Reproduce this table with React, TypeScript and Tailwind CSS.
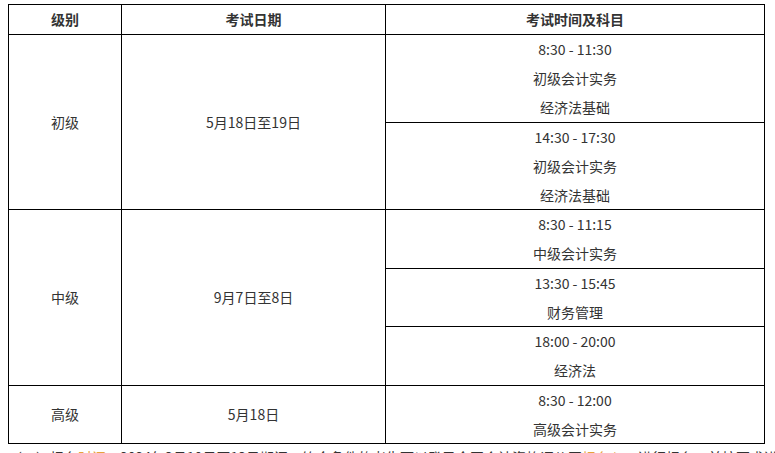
const font = { fontFamily: '"Noto Sans CJK SC", "Microsoft YaHei", sans-serif' };

type Slot = { time: string; subjects: string[] };

const levels: { name: string; date: string; slots: Slot[] }[] = [
  {
    name: "初级",
    date: "5月18日至19日",
    slots: [
      { time: "8:30 - 11:30", subjects: ["初级会计实务", "经济法基础"] },
      { time: "14:30 - 17:30", subjects: ["初级会计实务", "经济法基础"] },
    ],
  },
  {
    name: "中级",
    date: "9月7日至8日",
    slots: [
      { time: "8:30 - 11:15", subjects: ["中级会计实务"] },
      { time: "13:30 - 15:45", subjects: ["财务管理"] },
      { time: "18:00 - 20:00", subjects: ["经济法"] },
    ],
  },
  {
    name: "高级",
    date: "5月18日",
    slots: [{ time: "8:30 - 12:00", subjects: ["高级会计实务"] }],
  },
];

function SlotCell({ slot }: { slot: Slot }) {
  return (
    <td className="border border-black text-center align-middle p-0">
      <div className="leading-[29px]">{slot.time}</div>
      {slot.subjects.map((s, i) => (
        <div key={s} className={i === slot.subjects.length - 1 ? "leading-[28.5px]" : "leading-[29px]"}>
          {s}
        </div>
      ))}
    </td>
  );
}

export default function App() {
  return (
    <div className="w-[775px] h-[453px] overflow-hidden bg-white pl-2 pt-1 text-[14px] text-[#333]" style={font}>
      <table className="border-collapse w-[756px] table-fixed">
        <colgroup>
          <col className="w-[113px]" />
          <col className="w-[264px]" />
          <col className="w-[379px]" />
        </colgroup>
        <thead>
          <tr className="h-[30px]">
            <th className="border border-black font-bold text-center p-0">级别</th>
            <th className="border border-black font-bold text-center p-0">考试日期</th>
            <th className="border border-black font-bold text-center p-0">考试时间及科目</th>
          </tr>
        </thead>
        <tbody>
          {levels.map((lv) =>
            lv.slots.map((slot, i) => (
              <tr key={lv.name + i}>
                {i === 0 && (
                  <>
                    <td rowSpan={lv.slots.length} className="border border-black text-center align-middle p-0">
                      {lv.name}
                    </td>
                    <td rowSpan={lv.slots.length} className="border border-black text-center align-middle p-0">
                      {lv.date}
                    </td>
                  </>
                )}
                <SlotCell slot={slot} />
              </tr>
            ))
          )}
        </tbody>
      </table>
      <p className="mt-[1px] leading-[24px] whitespace-nowrap">
        （二）报名<span className="text-[#e8a23a]">时间</span>：2024年3月10日至13日期间，符合条件的考生可以登录全国会计资格评价网<span className="text-[#e8a23a]">报名入口</span>进行报名，并按要求进行缴费。
      </p>
    </div>
  );
}
